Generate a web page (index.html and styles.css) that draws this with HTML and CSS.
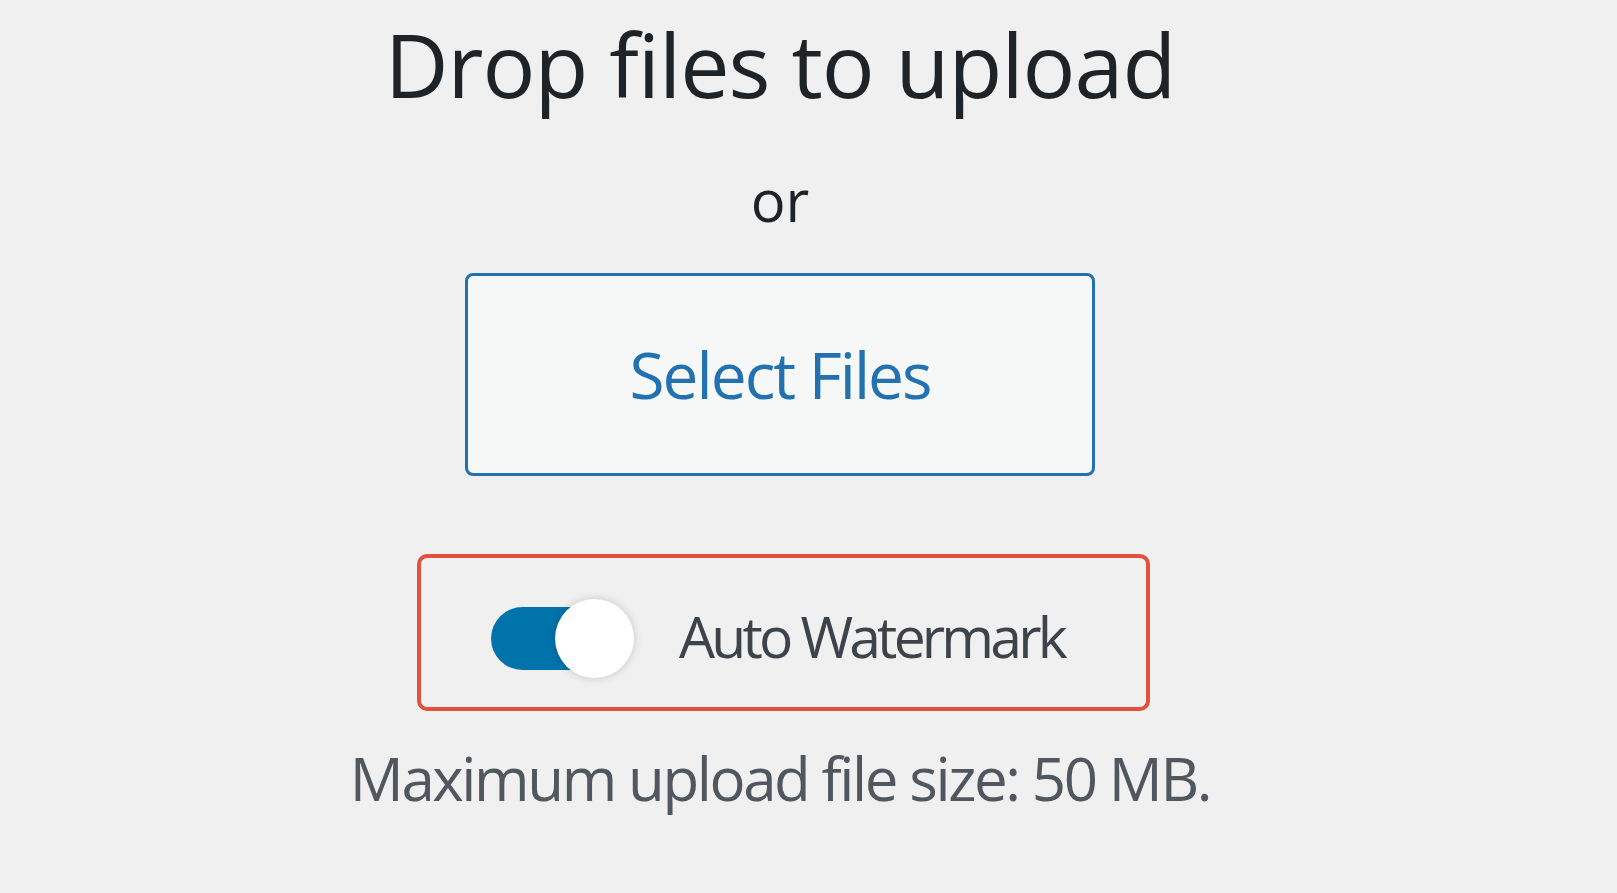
FILE: index.html
```html
<!DOCTYPE html>
<html lang="en">
<head>
<meta charset="utf-8">
<title>Upload</title>
<link rel="stylesheet" href="styles.css">
</head>
<body>
<div class="uploader">
  <h2 class="drop-title">Drop files to upload</h2>
  <p class="or">or</p>
  <button class="select-btn" type="button">Select Files</button>
  <div class="watermark-box">
    <span class="toggle" role="switch" aria-checked="true">
      <span class="track"></span>
      <span class="knob"></span>
    </span>
    <span class="toggle-label">Auto Watermark</span>
  </div>
  <p class="max-size">Maximum upload file size: 50 MB.</p>
</div>
</body>
</html>
```

FILE: styles.css
```css
html, body {
  margin: 0;
  padding: 0;
  background: #f0f0f1;
}

body {
  font-family: "Open Sans", "Noto Sans", sans-serif;
  width: 1617px;
  height: 893px;
  overflow: hidden;
}

.uploader {
  width: 1560px;
  display: flex;
  flex-direction: column;
  align-items: center;
  padding-top: 14px;
}

.drop-title {
  margin: 0;
  font-size: 88px;
  font-weight: 400;
  line-height: 100px;
  letter-spacing: -1px;
  color: #1d2327;
  white-space: nowrap;
}

.or {
  margin: 51px 0 0;
  font-size: 58px;
  line-height: 70px;
  color: #1d2327;
}

.select-btn {
  margin-top: 38px;
  width: 630px;
  height: 203px;
  box-sizing: border-box;
  border: 3px solid #2271b1;
  border-radius: 8px;
  background: #f6f7f7;
  color: #2271b1;
  font-family: inherit;
  font-size: 64px;
  letter-spacing: -2px;
  display: flex;
  align-items: center;
  justify-content: center;
  padding: 0;
}

.watermark-box {
  margin-top: 78px;
  width: 733px;
  height: 157px;
  box-sizing: border-box;
  border: 4px solid #e2513e;
  border-radius: 10px;
  display: flex;
  align-items: center;
  padding: 12px 0 0 70px;
  margin-left: 7px;
}

.toggle {
  position: relative;
  width: 143px;
  height: 79px;
  flex: none;
}

.track {
  position: absolute;
  left: 0;
  top: 8px;
  width: 120px;
  height: 63px;
  border-radius: 32px;
  background: #0073aa;
}

.knob {
  position: absolute;
  right: 0;
  top: 0;
  width: 79px;
  height: 79px;
  border-radius: 50%;
  background: #ffffff;
  box-shadow: 0 0 8px rgba(0, 0, 0, 0.18);
}

.toggle-label {
  margin-left: 45px;
  font-size: 57px;
  letter-spacing: -3.8px;
  color: #3c434a;
  white-space: nowrap;
  position: relative;
  top: -3px;
}

.max-size {
  margin: 27px 0 0;
  font-size: 60px;
  line-height: 80px;
  letter-spacing: -2.4px;
  color: #50575e;
  white-space: nowrap;
}
```
